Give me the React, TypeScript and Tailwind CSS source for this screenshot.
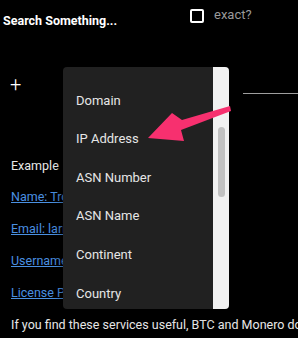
import React from 'react';

const options = ['Domain', 'IP Address', 'ASN Number', 'ASN Name', 'Continent', 'Country'];

const links = [
  'Name: Troy Hunt',
  'Email: larry@example.com',
  'Username: admin',
  'License Plate: ABC123',
];

const App = () => {
  return (
    <div className="relative w-[298px] h-[338px] overflow-hidden bg-black text-[12.5px] text-[#e8e8e8] font-['Roboto',sans-serif]">
      {/* header */}
      <div className="flex items-start h-[31px]">
        <div className="w-[190px] pl-[3px] pt-[13px] font-bold text-white leading-[16px]">Search Something...</div>
        <div className="mt-[9px] w-[14px] h-[14px] border-2 border-white rounded-[2px]" />
        <div className="ml-[10px] mt-[7px] text-[13px] text-[#9a9a9a] leading-[16px]">exact?</div>
      </div>

      {/* search row */}
      <div className="flex items-start h-[18px] mt-[45px]">
        <div className="pl-[10px] text-[20px] leading-[16px] font-light text-white">+</div>
        <div className="ml-auto mt-[17px] w-[55px] border-b border-[#9e9e9e]" />
      </div>

      {/* examples */}
      <div className="pl-[11px] mt-[64px] flex flex-col">
        <div className="h-[31px] leading-[16px]">Example</div>
        {links.map((l) => (
          <a key={l} className="h-[32px] leading-[16px] text-[#4a90e2] underline whitespace-nowrap">
            {l}
          </a>
        ))}
        <div className="whitespace-nowrap leading-[16px]">
          If you find these services useful, BTC and Monero donations are appreciated.
        </div>
      </div>

      {/* dropdown menu */}
      <div className="absolute left-[63px] top-[67px] w-[166px] h-[242px] bg-[#212121] rounded-[4px] overflow-hidden flex shadow-[0_4px_12px_rgba(0,0,0,0.6)]">
        <div className="w-[150px] pt-[14px] text-[13px]">
          {options.map((o) => (
            <div key={o} className="h-[38.6px] flex items-center pl-[13px] text-[#e6e6e6]">
              {o}
            </div>
          ))}
        </div>
        <div className="w-[16px] bg-[#f1f1f1] pt-[60px] pl-[5px]">
          <div className="w-[7px] h-[70px] rounded-full bg-[#c1c1c1]" />
        </div>
      </div>

      {/* annotation arrow */}
      <svg className="absolute left-0 top-0" width="298" height="338" viewBox="0 0 298 338">
        <polygon
          points="148,138 172,113 182,120 230,106 231,111 181,130 184,141"
          fill="#f7306f"
        />
      </svg>
    </div>
  );
};

export default App;
